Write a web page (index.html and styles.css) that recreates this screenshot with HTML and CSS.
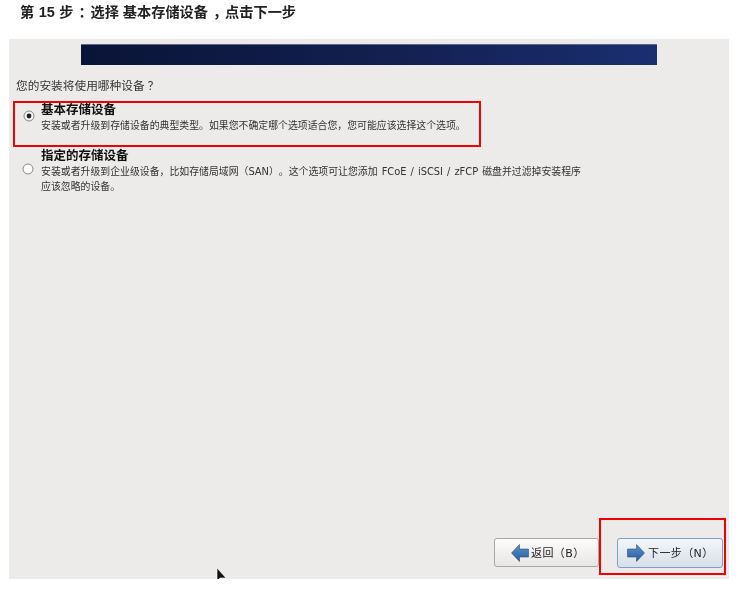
FILE: index.html
```html
<!DOCTYPE html>
<html lang="zh-CN">
<head>
<meta charset="utf-8">
<title>第 15 步</title>
<link rel="stylesheet" href="styles.css">
</head>
<body>
<h1 class="step-title">第 <span class="num">15</span> 步<span class="punct">：</span>选择 基本存储设备<span class="punct">，</span>点击下一步</h1>
<main class="panel">
  <div class="banner"></div>
  <p class="question">您的安装将使用哪种设备<span class="question-mark">？</span></p>
  <div class="options">
    <label class="option option-marked">
      <svg class="radio" width="12" height="12" viewBox="0 0 12 12"><circle cx="6" cy="6" r="5" fill="#f4f3f2" stroke="#8a8886"/><circle cx="6" cy="6" r="2.4" fill="#222"/></svg>
      <span class="option-body">
        <span class="option-title">基本存储设备</span>
        <span class="option-desc">安装或者升级到存储设备的典型类型。如果您不确定哪个选项适合您，您可能应该选择这个选项。</span>
      </span>
    </label>
    <label class="option option-second">
      <svg class="radio" width="12" height="12" viewBox="0 0 12 12"><circle cx="6" cy="6" r="5" fill="#fbfafa" stroke="#8a8886"/></svg>
      <span class="option-body">
        <span class="option-title">指定的存储设备</span>
        <span class="option-desc">安装或者升级到企业级设备，比如存储局域网（SAN）。这个选项可让您添加 FCoE / iSCSI / zFCP 磁盘并过滤掉安装程序<br>应该忽略的设备。</span>
      </span>
    </label>
  </div>
  <div class="footer">
    <button class="btn" type="button">
      <svg width="18" height="18" viewBox="0 0 18 18"><defs><linearGradient id="arrow-back" x1="0" y1="0" x2="0" y2="1"><stop offset="0" stop-color="#5a90c8"/><stop offset="1" stop-color="#2a5e9e"/></linearGradient></defs><path d="M0.5 9 L8.5 0.5 V5 H17.5 V13 H8.5 V17.5 Z" fill="url(#arrow-back)" stroke="#245488" stroke-width="0.6"/></svg>
      <span class="btn-label">返回（B）</span>
    </button>
    <button class="btn btn-focus" type="button">
      <svg width="18" height="18" viewBox="0 0 18 18"><defs><linearGradient id="arrow-next" x1="0" y1="0" x2="0" y2="1"><stop offset="0" stop-color="#5a90c8"/><stop offset="1" stop-color="#2a5e9e"/></linearGradient></defs><path d="M17.5 9 L9.5 0.5 V5 H0.5 V13 H9.5 V17.5 Z" fill="url(#arrow-next)" stroke="#245488" stroke-width="0.6"/></svg>
      <span class="btn-label">下一步（N）</span>
    </button>
  </div>
  <svg class="cursor" width="12" height="14" viewBox="0 0 12 14"><path d="M1 0 V13 L4 10 H10 Z" fill="#111" stroke="#fff" stroke-width="0.6"/></svg>
</main>
<div class="marker-next"></div>
</body>
</html>
```
FILE: styles.css
```css
* { box-sizing: border-box; }
html, body { margin: 0; padding: 0; }
body {
  position: relative;
  width: 740px;
  height: 591px;
  overflow: hidden;
  background: #fff;
  color: #222;
  font-family: "DejaVu Sans", "Noto Sans CJK SC", sans-serif;
  text-spacing-trim: space-all;
  filter: blur(0.3px);
}
.punct {
  font-family: "Noto Sans CJK TC", sans-serif;
  font-feature-settings: "halt";
  margin: 0 5px;
}
.question-mark {
  font-family: "Noto Sans CJK TC", sans-serif;
  margin-left: 3px;
}
.step-title {
  margin: 0;
  height: 39px;
  padding: 2px 0 0 20px;
  font-family: "Liberation Sans", "Noto Sans CJK SC", sans-serif;
  font-size: 14.2px;
  line-height: 18px;
  font-weight: bold;
  color: #222;
}
.num { font-size: 14.5px; margin: 0 0.5px; }
.panel {
  position: relative;
  width: 720px;
  height: 540px;
  margin-left: 9px;
  background: #ecebea;
  display: flex;
  flex-direction: column;
  overflow: hidden;
}
.banner {
  flex: none;
  width: 576px;
  height: 21px;
  margin: 5px 0 0 72px;
  background: linear-gradient(90deg, #0a1437 0%, #121f4e 50%, #1a2e70 100%);
  border-top: 1px solid #5c6688;
}
.question {
  margin: 12px 0 0 7px;
  font-size: 11.7px;
  line-height: 16px;
  color: #333;
}
.options { display: flex; flex-direction: column; }
.option { display: flex; align-items: flex-start; }
.option-marked {
  width: 468px;
  height: 46px;
  margin: 7px 0 0 4px;
  border: 2px solid #f00000;
  padding: 1px 0 0 8px;
}
.option-second { margin: 3px 0 0 13px; }
.radio { flex: none; margin-top: 6px; }
.option-marked .radio { margin-right: 6px; }
.option-second .radio { margin-right: 7px; margin-top: 13px; }
.option-body { display: flex; flex-direction: column; margin-top: -2px; }
.option-title {
  font-size: 12.5px;
  line-height: 15px;
  font-weight: bold;
  color: #111;
}
.option-desc {
  margin-top: 1px;
  font-size: 9.9px;
  line-height: 15px;
  word-spacing: 0.9px;
  color: #333;
  white-space: nowrap;
}
.footer {
  margin-top: auto;
  padding: 0 6px 11px 0;
  display: flex;
  justify-content: flex-end;
  align-items: flex-start;
  gap: 18px;
}
.btn {
  width: 105px;
  height: 29px;
  padding: 0 0 0 16px;
  display: flex;
  align-items: center;
  gap: 2px;
  border: 1px solid #a9a7a5;
  border-radius: 3px;
  background: linear-gradient(180deg, #fbfbfa 0%, #e9e7e5 100%);
  color: #222;
  font-family: inherit;
  font-size: 11px;
  letter-spacing: 0.4px;
}
.btn-label { padding-bottom: 2px; }
.btn-focus {
  width: 106px;
  height: 30px;
  border-color: #7ca0c8;
  background: linear-gradient(180deg, #f3f6f9 0%, #d8dfe7 100%);
  padding-left: 9px;
  gap: 3px;
}
.cursor { position: absolute; left: 207px; top: 529px; }
.marker-next {
  position: absolute;
  left: 599px;
  top: 518px;
  width: 127px;
  height: 57px;
  border: 2px solid #f00000;
}
```
